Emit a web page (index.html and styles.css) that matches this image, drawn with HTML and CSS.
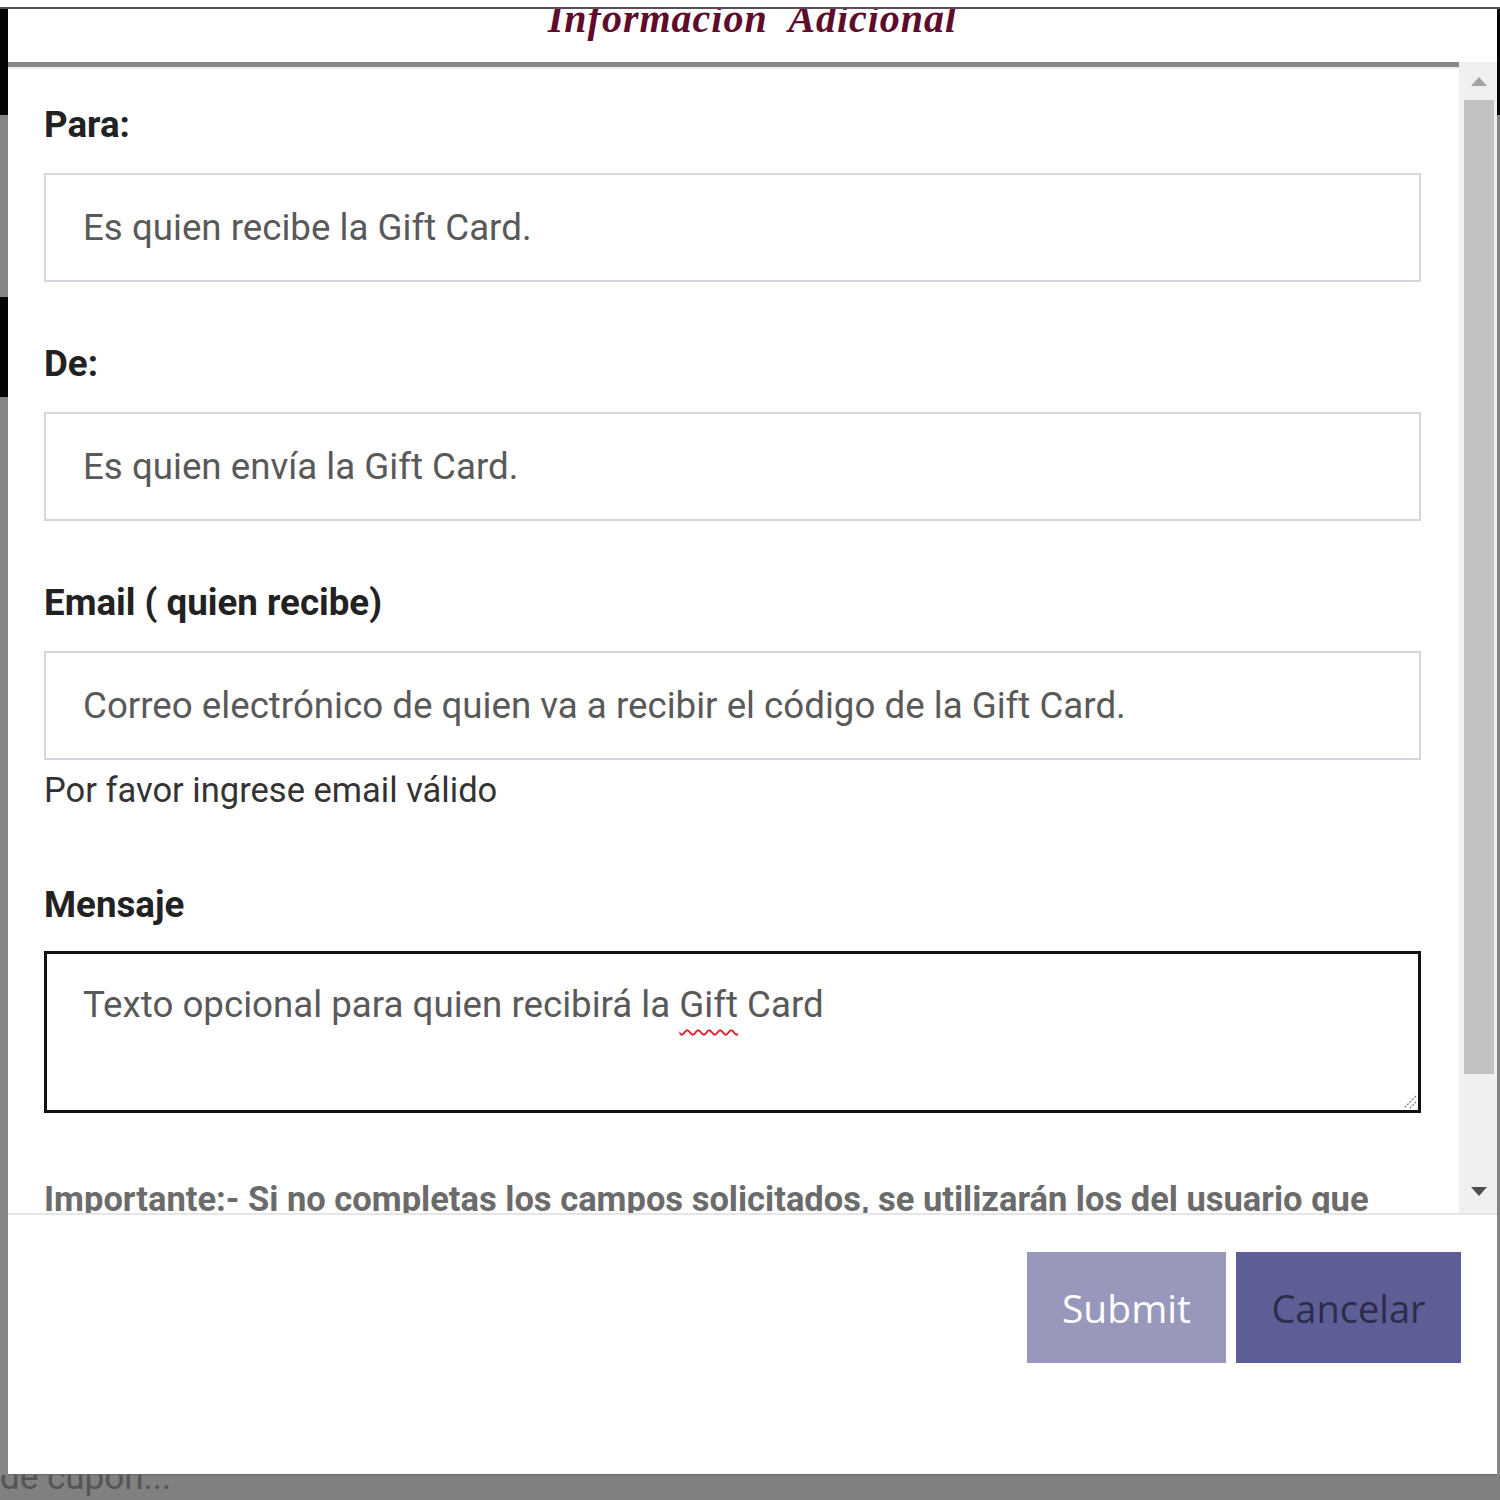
FILE: index.html
```html
<!DOCTYPE html>
<html lang="es">
<head>
<meta charset="utf-8">
<title>Informacion Adicional</title>
<link rel="stylesheet" href="styles.css">
</head>
<body>
<div class="top-white"></div>
<div class="top-line"></div>
<div class="stage">
  <div class="side side-left">
    <div class="seg seg-black seg-a"></div>
    <div class="seg seg-gray seg-b"></div>
    <div class="seg seg-black seg-c"></div>
    <div class="seg seg-gray seg-d"></div>
  </div>
  <div class="modal">
    <div class="modal-header">
      <h2 class="modal-title">Informacion&nbsp; Adicional</h2>
    </div>
    <div class="modal-body">
      <div class="scroll-content">
        <div class="header-rule"></div>
        <form class="form">
          <div class="group">
            <div class="label">Para:</div>
            <div class="field">Es quien recibe la Gift Card.</div>
          </div>
          <div class="group">
            <div class="label">De:</div>
            <div class="field">Es quien envía la Gift Card.</div>
          </div>
          <div class="group group-email">
            <div class="label">Email ( quien recibe)</div>
            <div class="field">Correo electrónico de quien va a recibir el código de la Gift Card.</div>
            <div class="help">Por favor ingrese email válido</div>
          </div>
          <div class="group group-msg">
            <div class="label">Mensaje</div>
            <div class="textarea">
              <span>Texto opcional para quien recibirá la <span class="misspelled">Gift</span> Card</span>
              <svg class="resize" width="16" height="16" viewBox="0 0 16 16">
                <path d="M15 3 L3 15" stroke="#777" stroke-width="1.3" stroke-dasharray="2 1.5"/>
                <path d="M15 9 L9 15" stroke="#777" stroke-width="1.3" stroke-dasharray="2 1.5"/>
              </svg>
            </div>
          </div>
          <p class="important">Importante:- Si no completas los campos solicitados, se utilizarán los del usuario que</p>
        </form>
      </div>
      <div class="scrollbar">
        <div class="sb-btn"><span class="arrow-up"></span></div>
        <div class="sb-thumb"></div>
        <div class="sb-space"></div>
        <div class="sb-btn"><span class="arrow-down"></span></div>
      </div>
    </div>
    <div class="modal-footer">
      <button class="btn btn-submit" type="button">Submit</button>
      <button class="btn btn-cancel" type="button">Cancelar</button>
    </div>
  </div>
  <div class="side side-right">
    <div class="seg seg-black seg-a"></div>
    <div class="seg seg-gray seg-rest"></div>
  </div>
</div>
<div class="below">
  <div class="below-text">de cupon...</div>
</div>
</body>
</html>
```

FILE: styles.css
```css
html, body {
  margin: 0;
  padding: 0;
}
body {
  width: 1500px;
  height: 1500px;
  overflow: hidden;
  background: #808080;
  font-family: Roboto, "Liberation Sans", sans-serif;
}
.top-white {
  height: 7px;
  background: #ffffff;
}
.top-line {
  height: 2px;
  background: #5c4c5c;
}
.stage {
  display: flex;
  height: 1466px;
  position: relative;
  z-index: 1;
}
.side {
  display: flex;
  flex-direction: column;
}
.side-left { width: 8px; }
.side-right { width: 3px; }
.seg-black { background: #050505; }
.seg-gray { background: #858585; }
.seg-a { height: 106px; }
.seg-b { height: 182px; }
.seg-c { height: 100px; }
.seg-d { flex: 1; }
.seg-rest { flex: 1; }

.modal {
  width: 1489px;
  background: #ffffff;
  display: flex;
  flex-direction: column;
  border-bottom: 1px solid #6a6a6a;
  box-sizing: border-box;
}
.modal-header {
  height: 53px;
  overflow: hidden;
  text-align: center;
}
.modal-title {
  margin: -10px 0 0;
  font-family: "Liberation Serif", "Times New Roman", serif;
  font-style: italic;
  font-weight: bold;
  font-size: 40px;
  line-height: 40px;
  color: #5e0b2c;
  letter-spacing: 1px;
}
.modal-body {
  height: 1151px;
  display: flex;
  overflow: hidden;
}
.scroll-content {
  flex: 1;
  overflow: hidden;
}
.header-rule {
  height: 5px;
  background: #888888;
  border-bottom: 2px solid #ececec;
}
.form {
  margin: 0;
  padding: 36px 38px 0 36px;
}
.group {
  margin-bottom: 62px;
}
.group-email {
  margin-bottom: 75px;
}
.label {
  font-size: 36.7px;
  line-height: 40px;
  font-weight: bold;
  color: #222222;
  margin-bottom: 28px;
}
.field {
  height: 109px;
  box-sizing: border-box;
  border: 2px solid #d6d6dc;
  display: flex;
  align-items: center;
  padding-left: 37px;
  font-size: 36.7px;
  color: #595959;
}
.help {
  margin-top: 10px;
  font-size: 34.5px;
  line-height: 40px;
  color: #333333;
}
.group-msg .label {
  margin-bottom: 26px;
}
.group-msg {
  margin-bottom: 66px;
}
.textarea {
  position: relative;
  height: 162px;
  box-sizing: border-box;
  border: 3px solid #111111;
  padding: 31px 0 0 36px;
  font-size: 36.7px;
  line-height: 40px;
  color: #595959;
}
.misspelled {
  text-decoration: underline wavy #e0202a;
  text-decoration-thickness: 2px;
  text-underline-offset: 12px;
}
.resize {
  position: absolute;
  right: 1px;
  bottom: 1px;
}
.important {
  margin: 0;
  font-size: 34.5px;
  line-height: 40px;
  font-weight: bold;
  color: #6b6b6b;
  white-space: nowrap;
}
.scrollbar {
  width: 38px;
  background: #f0f0f0;
  display: flex;
  flex-direction: column;
  padding-bottom: 3px;
  box-sizing: border-box;
}
.sb-btn {
  height: 38px;
  display: flex;
  align-items: center;
  justify-content: center;
  padding-left: 2px;
}
.arrow-up {
  width: 0;
  height: 0;
  border-left: 8px solid transparent;
  border-right: 8px solid transparent;
  border-bottom: 9px solid #a3a3a3;
}
.arrow-down {
  width: 0;
  height: 0;
  border-left: 8px solid transparent;
  border-right: 8px solid transparent;
  border-top: 9px solid #505050;
}
.sb-thumb {
  height: 974px;
  margin: 0 3px 0 5px;
  background: #c1c1c1;
}
.sb-space {
  flex: 1;
}
.modal-footer {
  border-top: 2px solid #e6e6e6;
  flex: 1;
  display: flex;
  justify-content: flex-end;
  align-items: flex-start;
  gap: 10px;
  padding: 37px 36px 0 0;
}
.btn {
  height: 111px;
  border: none;
  margin: 0;
  font-family: "Open Sans", "Noto Sans", sans-serif;
  font-size: 39px;
  padding: 0;
  cursor: pointer;
}
.btn-submit {
  width: 199px;
  background: #9898bc;
  color: #ffffff;
  font-weight: 500;
}
.btn-cancel {
  width: 225px;
  background: #5e5e96;
  color: #2c2c4c;
  font-size: 38px;
}
.below {
  height: 25px;
  overflow: hidden;
}
.below-text {
  margin-top: -15px;
  font-size: 35px;
  line-height: 36px;
  color: #555555;
  white-space: nowrap;
}
```
